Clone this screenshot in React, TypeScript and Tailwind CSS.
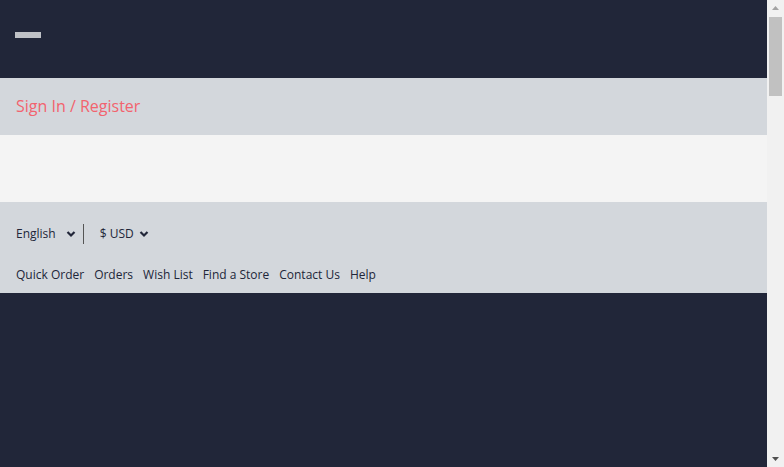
export default function App() {
    return (
        <div className="h-[467px] overflow-hidden flex bg-[#212639] font-['Open_Sans',sans-serif]">
            <main className="flex-1 min-w-0">
                <header className="h-[78px] px-[15px] pt-[32px]">
                    <div className="w-[26px] h-[6px] bg-[#bfc1c6]" />
                </header>
                <div className="h-[57px] bg-[#d3d7dc] flex items-center px-4 pb-[2px]">
                    <a className="text-[16px] text-[#f2636e]" href="#">
                        Sign In / Register
                    </a>
                </div>
                <div className="h-[67px] bg-[#f4f4f4]" />
                <div className="h-[91px] bg-[#d3d7dc] px-4 pt-[21px] text-[12px] text-[#212639]">
                    <div className="flex items-center h-[22px]">
                        <span>English</span>
                        <svg className="ml-[10px] w-[10px] h-[10px]" viewBox="0 0 10 10">
                            <path d="M1.5 3 5 6.5 8.5 3" fill="none" stroke="#212639" strokeWidth="2.2" />
                        </svg>
                        <div className="ml-[7px] w-px h-[20px] bg-[#555]" />
                        <span className="ml-[16px]">$ USD</span>
                        <svg className="ml-[5px] w-[10px] h-[10px]" viewBox="0 0 10 10">
                            <path d="M1.5 3 5 6.5 8.5 3" fill="none" stroke="#212639" strokeWidth="2.2" />
                        </svg>
                    </div>
                    <nav className="flex gap-[10px] mt-[21px]">
                        <a href="#">Quick Order</a>
                        <a href="#">Orders</a>
                        <a href="#">Wish List</a>
                        <a href="#">Find a Store</a>
                        <a href="#">Contact Us</a>
                        <a href="#">Help</a>
                    </nav>
                </div>
            </main>
            {/* browser scrollbar */}
            <aside className="w-[17px] bg-[#f1f1f1] flex flex-col items-center">
                <svg className="w-[17px] h-[17px]" viewBox="0 0 17 17">
                    <path d="M5 10 8.5 6 12 10Z" fill="#a3a3a3" />
                </svg>
                <div className="w-[13px] h-[79px] bg-[#c1c1c1]" />
                <div className="flex-1" />
                <svg className="w-[17px] h-[17px]" viewBox="0 0 17 17">
                    <path d="M5 7 8.5 11 12 7Z" fill="#505050" />
                </svg>
            </aside>
        </div>
    )
}
